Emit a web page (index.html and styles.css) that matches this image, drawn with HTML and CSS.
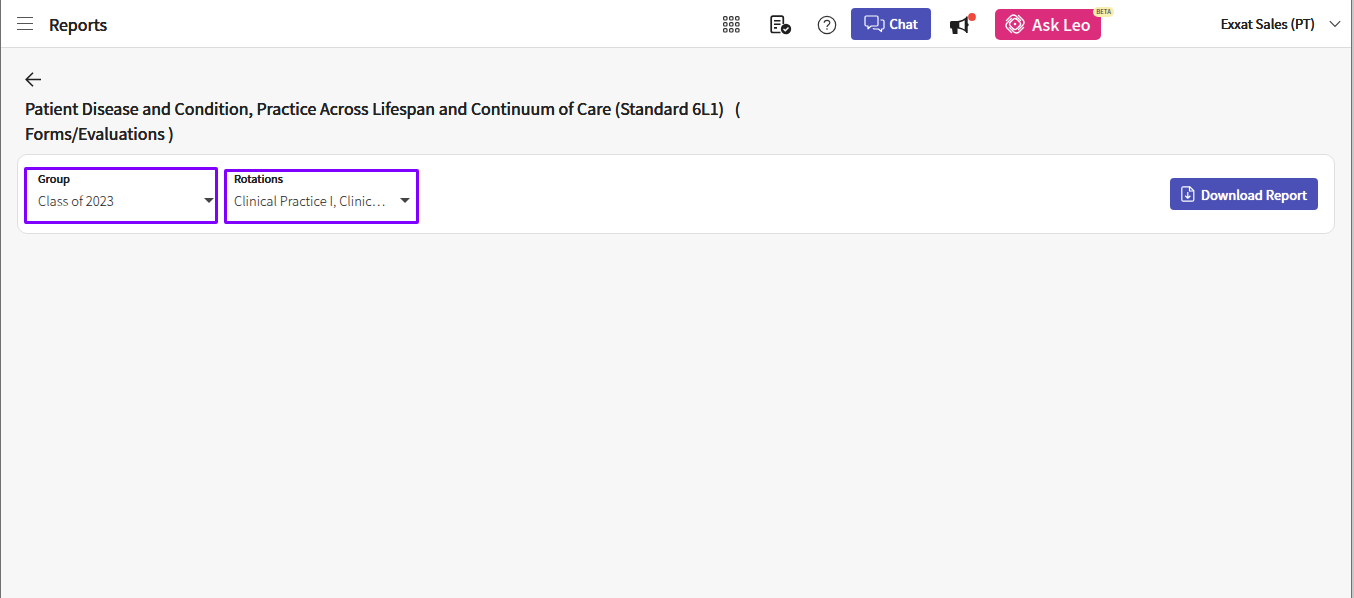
FILE: index.html
```html
<!DOCTYPE html>
<html lang="en">
<head>
    <meta charset="UTF-8">
    <meta name="viewport" content="width=device-width, initial-scale=1.0">
    <title>Reports</title>
    <link rel="stylesheet" href="styles.css">
</head>
<body>
    <div class="page">
        <header class="topbar">
            <button class="menu-button" type="button" aria-label="Menu">
                <svg width="16" height="14" viewBox="0 0 16 14" fill="none" stroke="#555">
                    <path d="M0 .5h16M0 6.5h16M0 12.5h16"/>
                </svg>
            </button>
            <h1>Reports</h1>

            <nav class="tools">
                <button class="icon-button" type="button" aria-label="Apps">
                    <svg width="18" height="18" viewBox="0 0 18 18" fill="none" stroke="#333" stroke-width="1.2">
                        <rect x="1.600" y="1.600" width="3.4" height="3.4" rx="1"/>
                        <rect x="7.600" y="1.600" width="3.4" height="3.4" rx="1"/>
                        <rect x="13.600" y="1.600" width="3.4" height="3.4" rx="1"/>
                        <rect x="1.600" y="7.600" width="3.4" height="3.4" rx="1"/>
                        <rect x="7.600" y="7.600" width="3.4" height="3.4" rx="1"/>
                        <rect x="13.600" y="7.600" width="3.4" height="3.4" rx="1"/>
                        <rect x="1.600" y="13.600" width="3.4" height="3.4" rx="1"/>
                        <rect x="7.600" y="13.600" width="3.4" height="3.4" rx="1"/>
                        <rect x="13.600" y="13.600" width="3.4" height="3.4" rx="1"/>
                    </svg>
                </button>
                <button class="icon-button tasks-button" type="button" aria-label="Tasks">
                    <svg width="22" height="20" viewBox="0 0 22 20" fill="none">
                        <path d="M10.500 17.500H3Q1.200 17.500 1.200 15.700V3Q1.200 1.200 3 1.200h8.500Q13.300 1.200 13.300 3v6" stroke="#1f1f1f" stroke-width="1.700"/>
                        <path d="M4 5.700h6.500M4 9.200h6.500M4 12.900h3" stroke="#1f1f1f" stroke-width="1.600"/>
                        <circle cx="16" cy="14" r="5.200" fill="#1f1f1f"/>
                        <path d="M13.500 14l1.800 1.800 3.200-3.300" stroke="#fff" stroke-width="1.400"/>
                    </svg>
                </button>
                <button class="icon-button help-button" type="button" aria-label="Help">
                    <svg width="20" height="20" viewBox="0 0 20 20" fill="none" stroke="#333" stroke-width="1.200">
                        <circle cx="10" cy="10" r="8.700"/>
                        <path d="M7.200 7.800C7.300 4.600 12.900 4.700 12.800 7.800 12.800 9.700 10 9.700 10 12"/>
                        <path d="M10 13.200v1.600"/>
                    </svg>
                </button>
                <button class="primary-button chat-button" type="button">
                    <svg width="22" height="18" viewBox="0 0 22 18" fill="none" stroke="#fff" stroke-width="1.200" stroke-linejoin="round">
                        <path d="M2.200 1h10.600Q14 1 14 2.200v7.600Q14 11 12.800 11H7.200L4 13.800V11H2.200Q1 11 1 9.800V2.200Q1 1 2.200 1z"/>
                        <path d="M16.500 5h2.300Q20 5 20 6.200v6.600Q20 14 18.800 14H17.500v2.600L14.500 14h-4Q9.300 14 9.300 13"/>
                    </svg>
                    Chat
                </button>
                <button class="icon-button news-button" type="button" aria-label="Announcements">
                    <svg width="28" height="24" viewBox="0 0 28 24">
                        <path d="M1 10.500Q1 9 2.500 9H8.500Q14 8.600 17.400 5V20.500Q14 17.200 8.500 16.600V22H3.800L3 16.600H2.500Q1 16.600 1 15z" fill="#1f1f1f"/>
                        <path d="M10.300 10.400Q13.500 9.700 15.700 8.200v9.200Q13.500 15.900 10.300 15.200z" fill="#fff"/>
                        <path d="M17 4.500h1.700v6.700q1 .4 1 1.600t-1 1.600V21H17z" fill="#1f1f1f"/>
                        <circle cx="23" cy="5" r="3.900" fill="#ee4a3e"/>
                    </svg>
                </button>
                <button class="leo-button" type="button">
                    <svg width="20" height="20" viewBox="0 0 20 20" fill="none" stroke="#fff" stroke-width="1.400" stroke-linecap="round" stroke-linejoin="round">
                        <g id="blade">
                            <path d="M1.500 6.500L6 2Q8.500 0 11 2L15.500 6.500"/>
                            <path d="M4.800 8.800L8.600 5Q10 3.800 11.400 5"/>
                        </g>
                        <use href="#blade" transform="rotate(90 10 10)"/>
                        <use href="#blade" transform="rotate(180 10 10)"/>
                        <use href="#blade" transform="rotate(270 10 10)"/>
                        <circle cx="10" cy="10" r="1.300" fill="#fff" stroke="none"/>
                    </svg>
                    Ask Leo
                    <span class="beta">BETA</span>
                </button>
                <button class="user-button" type="button">
                    Exxat Sales (PT)
                    <svg width="12" height="8" viewBox="0 0 12 8" fill="none" stroke="#444" stroke-width="1.200">
                        <path d="M.8 1.200L6 6.400l5.200-5.200"/>
                    </svg>
                </button>
            </nav>
        </header>

        <main>
            <a class="back" href="#" aria-label="Back">
                <svg width="16" height="16" viewBox="0 0 16 16" fill="none" stroke="#222" stroke-width="1.600">
                    <path d="M8 .8L1.200 7.500 8 14.200M1.200 7.500H16"/>
                </svg>
            </a>
            <h2>Patient Disease and Condition, Practice Across Lifespan and Continuum of Care (Standard 6L1) &nbsp; (<br>Forms/Evaluations )</h2>

            <section class="filters">
                <div class="field">
                    <label for="group">Group</label>
                    <select id="group">
                        <option>Class of 2023</option>
                    </select>
                    <svg class="caret" width="10" height="5" viewBox="0 0 10 5"><path d="M0 0h10L5 5z" fill="#444"/></svg>
                </div>
                <div class="field field-rotations">
                    <label for="rotations">Rotations</label>
                    <select id="rotations">
                        <option>Clinical Practice I, Clinic…</option>
                    </select>
                    <svg class="caret" width="10" height="5" viewBox="0 0 10 5"><path d="M0 0h10L5 5z" fill="#444"/></svg>
                </div>
                <button class="primary-button download-button" type="button">
                    <svg width="14" height="16" viewBox="0 0 14 16" fill="none" stroke="#fff" stroke-width="1.200" stroke-linejoin="round">
                        <path d="M2.200.8h6.500L12.800 4.800v8.900q0 1.500-1.500 1.500H2.200Q.8 15.200.8 13.700V2.300Q.8.800 2.200.8z"/>
                        <path d="M8.500.8V5h4.300M6.800 6v6M4.200 9.700l2.600 2.500 2.600-2.500"/>
                    </svg>
                    Download Report
                </button>
            </section>
        </main>
    </div>
</body>
</html>
```

FILE: styles.css
```css
* {
    box-sizing: border-box;
}
body {
    margin: 0;
    padding-right: 2px;
    background-color: #c8c8c8;
    color: #222;
    font-family: "Noto Sans CJK SC", "Noto Sans", sans-serif;
}
button,
select {
    font-family: inherit;
    color: inherit;
    border: 0;
    padding: 0;
    background: none;
}
button {
    display: flex;
    align-items: center;
    justify-content: center;
    cursor: pointer;
}
svg {
    display: block;
    flex: none;
}
h1,
h2,
.field label,
.user-button,
.primary-button {
    font-weight: 400;
    text-shadow: 0 0 currentColor, 0 0 currentColor;
}
.page {
    min-height: 100vh;
    background-color: #f7f7f7;
    border: solid #707070;
    border-width: 0 1px;
}
.topbar {
    display: flex;
    align-items: center;
    height: 48px;
    padding: 0 10px 0 16px;
    background-color: #fff;
    border-bottom: 1px solid #dcdcdc;
}
.topbar h1 {
    margin: 0 0 0 16px;
    font-size: 16px;
    line-height: 24px;
}
.tools {
    display: flex;
    align-items: center;
    margin-left: auto;
}
.icon-button {
    width: 48px;
    height: 32px;
}
.tasks-button {
    padding: 2px 0 0 3px;
}
.help-button {
    padding-top: 2px;
}
.news-button {
    width: 64px;
}
.primary-button {
    height: 32px;
    border-radius: 4px;
    background-color: #4a50b5;
    color: #fff;
    font-size: 13px;
    text-shadow: 0 0 currentColor, 0 0 1px currentColor;
}
.chat-button {
    width: 80px;
    gap: 3px;
}
.leo-button {
    position: relative;
    width: 106px;
    height: 31px;
    margin-top: 1px;
    gap: 7px;
    border-radius: 5px;
    background-color: #dc2d7d;
    color: #fff;
    font-size: 16px;
    font-weight: 500;
}
.beta {
    position: absolute;
    top: -2px;
    right: -13px;
    padding: 0 3px;
    border-radius: 5px;
    background-color: #f8eeb0;
    color: #444;
    font-size: 6px;
    line-height: 10px;
}
.user-button {
    width: 240px;
    justify-content: flex-end;
    gap: 14px;
    font-size: 13px;
}
main {
    padding: 24px 16px;
}
.back {
    display: block;
    width: 16px;
    margin-left: 8px;
}
h2 {
    margin: 8px;
    font-size: 16px;
    line-height: 25px;
}
.filters {
    display: flex;
    align-items: flex-end;
    min-height: 80px;
    padding: 9px 16px 9px 6px;
    background-color: #fff;
    border: 1px solid #dfdfdf;
    border-radius: 10px;
}
.field {
    position: relative;
    width: 194px;
    height: 57px;
    margin-right: 6px;
    padding: 2px 0 0 11px;
    border: 3px solid #7f00ff;
    border-radius: 2px;
}
.field-rotations {
    width: 195px;
    height: 55px;
    padding: 0 0 0 7px;
}
.field label {
    display: block;
    font-size: 11px;
    line-height: 12px;
}
.field select {
    display: block;
    width: 100%;
    margin-top: 5px;
    appearance: none;
    color: #222;
    font-size: 13px;
    font-weight: 300;
    line-height: 24px;
}
.caret {
    position: absolute;
    right: 1px;
    bottom: 18px;
    pointer-events: none;
}
.field-rotations .caret {
    right: 6px;
}
.download-button {
    width: 148px;
    gap: 6px;
    margin: 0 0 14px auto;
}
```
